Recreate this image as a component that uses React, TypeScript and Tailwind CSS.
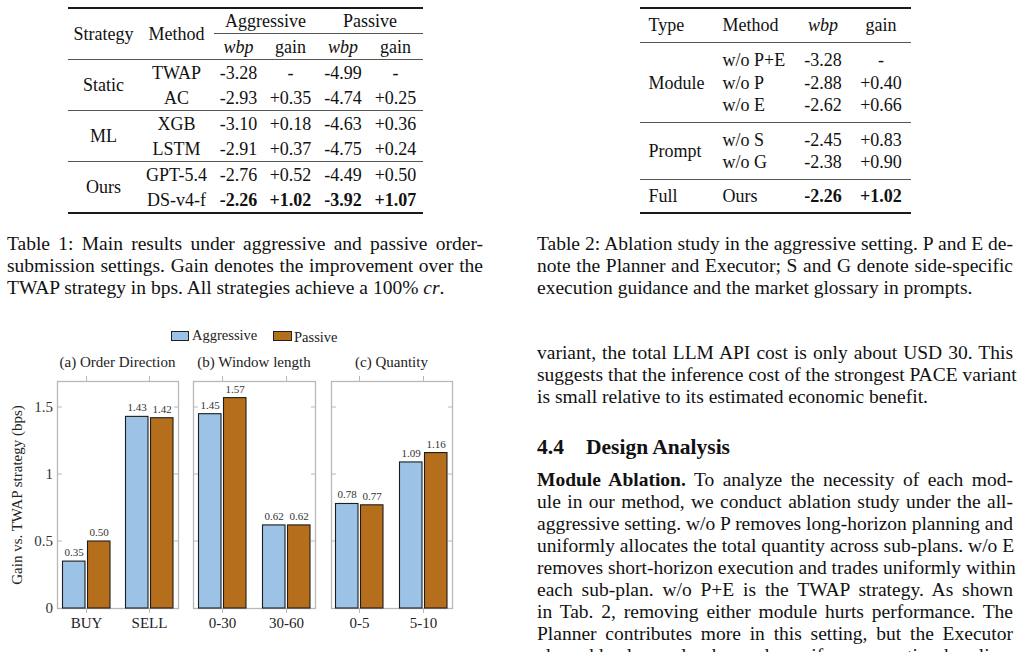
import React from "react";

const BLUE = "#9cc3e6";
const ORANGE = "#b56f1c";

function Line({ children, last = false }: { children: React.ReactNode; last?: boolean }) {
  return (
    <div
      className={
        last
          ? "h-[22px] leading-[22px] whitespace-nowrap"
          : "h-[22px] leading-[22px] whitespace-nowrap text-justify [text-align-last:justify]"
      }
    >
      {children}
    </div>
  );
}

function C({ children, className = "" }: { children?: React.ReactNode; className?: string }) {
  return <div className={"flex items-center justify-center " + className}>{children}</div>;
}

function Table1() {
  const rows = [
    [
      "Static",
      ["TWAP", "-3.28", "-", "-4.99", "-"],
      ["AC", "-2.93", "+0.35", "-4.74", "+0.25"],
    ],
    [
      "ML",
      ["XGB", "-3.10", "+0.18", "-4.63", "+0.36"],
      ["LSTM", "-2.91", "+0.37", "-4.75", "+0.24"],
    ],
  ] as const;
  return (
    <div className="w-[355px] mx-auto text-[18px] leading-none">
      <div className="h-[1.5px] bg-[#1a1a1a]" />
      <div className="grid grid-cols-[72px_74px_50px_54px_51px_54px] grid-rows-[24.5px_1px_25px]">
        <C className="row-span-3">Strategy</C>
        <C className="row-span-3">Method</C>
        <C className="col-span-2">Aggressive</C>
        <C className="col-span-2">Passive</C>
        <div className="col-span-4 bg-[#555]" />
        <C className="italic">wbp</C>
        <C>gain</C>
        <C className="italic">wbp</C>
        <C>gain</C>
      </div>
      {rows.map((g) => (
        <div key={g[0]}>
          <div className="h-px bg-[#555]" />
          <div className="grid grid-cols-[72px_74px_50px_54px_51px_54px] grid-rows-[25px_25px]">
            <C className="row-span-2">{g[0]}</C>
            {g[1].map((t, i) => (
              <C key={"a" + i}>{t}</C>
            ))}
            {g[2].map((t, i) => (
              <C key={"b" + i}>{t}</C>
            ))}
          </div>
        </div>
      ))}
      <div className="h-px bg-[#555]" />
      <div className="grid grid-cols-[72px_74px_50px_54px_51px_54px] grid-rows-[25px_25px]">
        <C className="row-span-2">Ours</C>
        <C>GPT-5.4</C>
        <C>-2.76</C>
        <C>+0.52</C>
        <C>-4.49</C>
        <C>+0.50</C>
        <C>DS-v4-f</C>
        <C className="font-bold">-2.26</C>
        <C className="font-bold">+1.02</C>
        <C className="font-bold">-3.92</C>
        <C className="font-bold">+1.07</C>
      </div>
      <div className="h-[1.5px] bg-[#1a1a1a]" />
    </div>
  );
}

function Table2() {
  const cols = "grid grid-cols-[73px_82px_57px_59px]";
  const L = ({ children, className = "" }: { children?: React.ReactNode; className?: string }) => (
    <div className={"flex items-center " + className}>{children}</div>
  );
  return (
    <div className="w-[271px] mx-auto text-[18px] leading-none">
      <div className="h-[1.5px] bg-[#1a1a1a]" />
      <div className={cols + " h-[33.5px]"}>
        <L className="pl-[9px]">Type</L>
        <L className="pl-[10px]">Method</L>
        <C className="italic">wbp</C>
        <C>gain</C>
      </div>
      <div className="h-px bg-[#555]" />
      <div className="h-[79px] flex flex-col justify-center">
        <div className={cols + " grid-rows-[22.5px_22.5px_22.5px]"}>
          <L className="row-span-3 pl-[9px]">Module</L>
          <L className="pl-[10px]">w/o P+E</L>
          <C>-3.28</C>
          <C>-</C>
          <L className="pl-[10px]">w/o P</L>
          <C>-2.88</C>
          <C>+0.40</C>
          <L className="pl-[10px]">w/o E</L>
          <C>-2.62</C>
          <C>+0.66</C>
        </div>
      </div>
      <div className="h-px bg-[#555]" />
      <div className="h-[56px] flex flex-col justify-center">
        <div className={cols + " grid-rows-[22.5px_22.5px]"}>
          <L className="row-span-2 pl-[9px]">Prompt</L>
          <L className="pl-[10px]">w/o S</L>
          <C>-2.45</C>
          <C>+0.83</C>
          <L className="pl-[10px]">w/o G</L>
          <C>-2.38</C>
          <C>+0.90</C>
        </div>
      </div>
      <div className="h-px bg-[#555]" />
      <div className={cols + " h-[32px]"}>
        <L className="pl-[9px]">Full</L>
        <L className="pl-[10px]">Ours</L>
        <C className="font-bold">-2.26</C>
        <C className="font-bold">+1.02</C>
      </div>
      <div className="h-[1.5px] bg-[#1a1a1a]" />
    </div>
  );
}

const Y0 = 608;
const K = 134;
const panels = [
  {
    x0: 57,
    x1: 178,
    title: "(a) Order Direction",
    cats: [
      { c: 86, l: "BUY", a: 0.35, p: 0.5 },
      { c: 149, l: "SELL", a: 1.43, p: 1.42 },
    ],
  },
  {
    x0: 193,
    x1: 315,
    title: "(b) Window length",
    cats: [
      { c: 222, l: "0-30", a: 1.45, p: 1.57 },
      { c: 286, l: "30-60", a: 0.62, p: 0.62 },
    ],
  },
  {
    x0: 331,
    x1: 452,
    title: "(c) Quantity",
    cats: [
      { c: 359, l: "0-5", a: 0.78, p: 0.77 },
      { c: 423, l: "5-10", a: 1.09, p: 1.16 },
    ],
  },
];

function Chart() {
  const top = 299;
  const grey = "#b8b8b8";
  return (
    <svg width={476} height={353} className="block">
      <g transform={`translate(-7,-${top})`} fill="#222">
        {/* legend */}
        <rect x={171.5} y={331.5} width={17} height={9} fill={BLUE} stroke="#222" strokeWidth={1} />
        <text x={192} y={339.5} fontSize={14.5}>
          Aggressive
        </text>
        <rect x={273.5} y={331.5} width={18} height={9} fill={ORANGE} stroke="#222" strokeWidth={1} />
        <text x={294} y={342} fontSize={14.5}>
          Passive
        </text>
        {/* y title */}
        <text x={22} y={495} fontSize={15} textAnchor="middle" transform="rotate(-90 22 495)">
          Gain vs. TWAP strategy (bps)
        </text>
        {/* y labels */}
        {[0, 0.5, 1, 1.5].map((v) => (
          <text key={v} x={53} y={Y0 - v * K + 5} fontSize={15} textAnchor="end" fill="#333">
            {String(v)}
          </text>
        ))}
        {panels.map((p) => (
          <g key={p.title}>
            <text x={(p.x0 + p.x1) / 2} y={367} fontSize={15} textAnchor="middle" fill="#222">
              {p.title}
            </text>
            {/* frame */}
            <rect x={p.x0 + 0.5} y={381.5} width={p.x1 - p.x0} height={Y0 - 381} fill="none" stroke={grey} strokeWidth={1.3} />
            {/* y ticks */}
            {[0.5, 1, 1.5].map((v) => (
              <g key={v} stroke={grey} strokeWidth={1}>
                <line x1={p.x0} x2={p.x0 + 5} y1={Y0 - v * K} y2={Y0 - v * K} />
                <line x1={p.x1 - 4} x2={p.x1 + 1} y1={Y0 - v * K} y2={Y0 - v * K} />
              </g>
            ))}
            {p.cats.map((c) => (
              <g key={c.l}>
                <line x1={c.c + 0.5} x2={c.c + 0.5} y1={376} y2={381} stroke={grey} strokeWidth={1} />
                <line x1={c.c + 0.5} x2={c.c + 0.5} y1={608} y2={613} stroke={grey} strokeWidth={1} />
                <rect
                  x={c.c - 23.5}
                  y={Y0 - c.a * K}
                  width={22.5}
                  height={c.a * K}
                  fill={BLUE}
                  stroke="#1c1c1c"
                  strokeWidth={1.1}
                />
                <rect
                  x={c.c + 1.5}
                  y={Y0 - c.p * K}
                  width={22.5}
                  height={c.p * K}
                  fill={ORANGE}
                  stroke="#1c1c1c"
                  strokeWidth={1.1}
                />
                <text x={c.c - 12} y={Y0 - c.a * K - 5} fontSize={11} textAnchor="middle" fill="#333">
                  {c.a.toFixed(2)}
                </text>
                <text x={c.c + 13} y={Y0 - c.p * K - 5} fontSize={11} textAnchor="middle" fill="#333">
                  {c.p.toFixed(2)}
                </text>
                <text x={c.c + 0.5} y={628} fontSize={15} textAnchor="middle" fill="#222">
                  {c.l}
                </text>
              </g>
            ))}
          </g>
        ))}
      </g>
    </svg>
  );
}

export default function App() {
  return (
    <div className="w-[1021px] h-[652px] overflow-hidden bg-white text-[#111] font-['Liberation_Serif','Times_New_Roman',serif] flex">
      <div className="ml-[7px] w-[476px] shrink-0 flex flex-col pt-[7px]">
        <Table1 />
        <div className="mt-[19.5px] text-[19.5px]">
          <Line>Table 1: Main results under aggressive and passive order-</Line>
          <Line>submission settings. Gain denotes the improvement over the</Line>
          <Line last>
            TWAP strategy in bps. All strategies achieve a 100% <span className="italic">cr</span>.
          </Line>
        </div>
        <Chart />
      </div>
      <div className="ml-[54px] w-[476px] shrink-0 flex flex-col pt-[7px]">
        <Table2 />
        <div className="mt-[19.5px] text-[19.5px]">
          <Line>Table 2: Ablation study in the aggressive setting. P and E de-</Line>
          <Line>note the Planner and Executor; S and G denote side-specific</Line>
          <Line last>execution guidance and the market glossary in prompts.</Line>
        </div>
        <div className="mt-[43px] text-[19.5px]">
          <Line>variant, the total LLM API cost is only about USD 30. This</Line>
          <Line>suggests that the inference cost of the strongest PACE variant</Line>
          <Line last>is small relative to its estimated economic benefit.</Line>
        </div>
        <div className="mt-[26px] h-[26px] leading-[26px] text-[21.5px] font-bold whitespace-nowrap">
          <span className="inline-block w-[49px]">4.4</span>Design Analysis
        </div>
        <div className="mt-[9px] text-[19.5px]">
          <Line>
            <span className="font-bold">Module Ablation.</span> To analyze the necessity of each mod-
          </Line>
          <Line>ule in our method, we conduct ablation study under the all-</Line>
          <Line>aggressive setting. w/o P removes long-horizon planning and</Line>
          <Line>uniformly allocates the total quantity across sub-plans. w/o E</Line>
          <Line>removes short-horizon execution and trades uniformly within</Line>
          <Line>each sub-plan. w/o P+E is the TWAP strategy. As shown</Line>
          <Line>in Tab. 2, removing either module hurts performance. The</Line>
          <Line>Planner contributes more in this setting, but the Executor</Line>
          <Line>also adds clear value beyond a uniform execution baseline.</Line>
        </div>
      </div>
    </div>
  );
}
